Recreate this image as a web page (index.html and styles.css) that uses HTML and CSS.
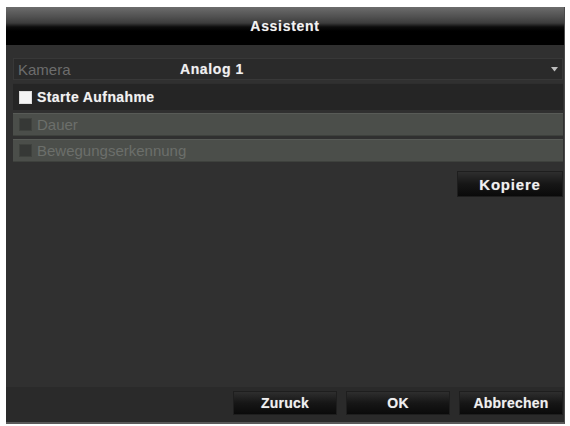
FILE: index.html
```html
<!DOCTYPE html>
<html lang="de">
<head>
<meta charset="utf-8">
<link rel="stylesheet" href="styles.css">
</head>
<body>
<div class="dialog">
  <div class="header">Assistent</div>
  <div class="content">
    <div class="row select-row">
      <span class="label">Kamera</span>
      <span class="value">Analog 1</span>
      <svg class="arrow" width="7" height="5" viewBox="0 0 7 5"><path d="M0 0 L7 0 L3.5 4.5 Z" fill="#bdbdbd"/></svg>
    </div>
    <div class="row check-row active">
      <span class="box on"></span>
      <span class="text">Starte Aufnahme</span>
    </div>
    <div class="row check-row disabled">
      <span class="box"></span>
      <span class="text">Dauer</span>
    </div>
    <div class="row check-row disabled">
      <span class="box"></span>
      <span class="text">Bewegungserkennung</span>
    </div>
    <div class="copy-line">
      <button class="btn copy">Kopiere</button>
    </div>
  </div>
  <div class="footer">
    <button class="btn">Zuruck</button>
    <button class="btn">OK</button>
    <button class="btn">Abbrechen</button>
  </div>
</div>
</body>
</html>
```

FILE: styles.css
```css
html, body {
  margin: 0;
  padding: 0;
  background: #ffffff;
}
body {
  width: 570px;
  height: 426px;
  overflow: hidden;
  font-family: "Liberation Sans", Arial, sans-serif;
}
.dialog {
  margin: 7px 5px 0 6px;
  height: 417px;
  box-sizing: border-box;
  background: #303030;
  border-right: 1px solid #4a4a4a;
  border-bottom: 2px solid #5a5a5a;
  display: flex;
  flex-direction: column;
}
.header {
  height: 38px;
  flex: 0 0 38px;
  box-sizing: border-box;
  padding-top: 11px;
  text-align: center;
  color: #f2f2f2;
  font-weight: bold;
  font-size: 14px;
  letter-spacing: 0.7px;
  background: linear-gradient(to bottom, #6c6c6c 0px, #505050 10px, #3c3c3c 16px, #0c0c0c 20px, #000000 24px, #000000 38px);
  text-shadow: 0 0 1px rgba(255,255,255,0.4);
}
.content {
  padding: 13px 1px 0 7px;
  display: flex;
  flex-direction: column;
}
.row {
  display: flex;
  align-items: center;
  box-sizing: border-box;
}
.select-row {
  height: 22px;
  background: #2a2a2a;
  border: 1px solid #383838;
  padding-left: 4px;
}
.label {
  color: #6d6d6d;
  font-size: 15px;
  width: 162px;
}
.value {
  color: #f0f0f0;
  font-weight: bold;
  font-size: 14px;
  letter-spacing: 0.6px;
  flex: 1;
  text-shadow: 0 0 1px rgba(255,255,255,0.4);
}
.arrow {
  margin-right: 4px;
  margin-top: 1px;
}
.check-row {
  height: 24px;
  padding-left: 6px;
}
.check-row.active {
  margin-top: 3px;
  height: 27px;
  background: #252525;
  border-top: 1px solid #2e2e2e;
}
.check-row.disabled {
  margin-top: 3px;
  height: 23px;
  background: #4b4e4a;
  border-top: 1px solid #585b57;
  border-bottom: 1px solid #3e413d;
}
.box {
  width: 13px;
  height: 13px;
  box-sizing: border-box;
  margin-right: 5px;
  background: #363836;
  border: 1px solid #3f423e;
}
.box.on {
  background: #f4f4f4;
  border-color: #dcdcdc;
}
.active .text {
  color: #f2f2f2;
  font-weight: bold;
  font-size: 14px;
  letter-spacing: 0.4px;
  text-shadow: 0 0 1px rgba(255,255,255,0.4);
}
.disabled .text {
  color: #6c6f6b;
  font-size: 15px;
}
.copy-line {
  display: flex;
  justify-content: flex-end;
  margin-top: 9px;
}
.btn {
  width: 104px;
  height: 25px;
  box-sizing: border-box;
  border: 1px solid #1e1e1e;
  background: linear-gradient(to bottom, #2e2e2e 0%, #161616 50%, #0a0a0a 100%);
  color: #f0f0f0;
  font-family: "Liberation Sans", Arial, sans-serif;
  font-weight: bold;
  font-size: 14px;
  letter-spacing: 0.2px;
  padding: 0;
  text-shadow: 0 0 1px rgba(255,255,255,0.4);
}
.copy-line .btn {
  width: 106px;
  height: 26px;
  font-size: 15px;
  letter-spacing: 0.8px;
}
.footer {
  margin-top: auto;
  height: 35px;
  flex: 0 0 35px;
  background: #2a2a2a;
  display: flex;
  justify-content: flex-end;
  gap: 9px;
  padding: 4px 1px 0 0;
  box-sizing: border-box;
}
.footer .btn {
  height: 24px;
}
```
